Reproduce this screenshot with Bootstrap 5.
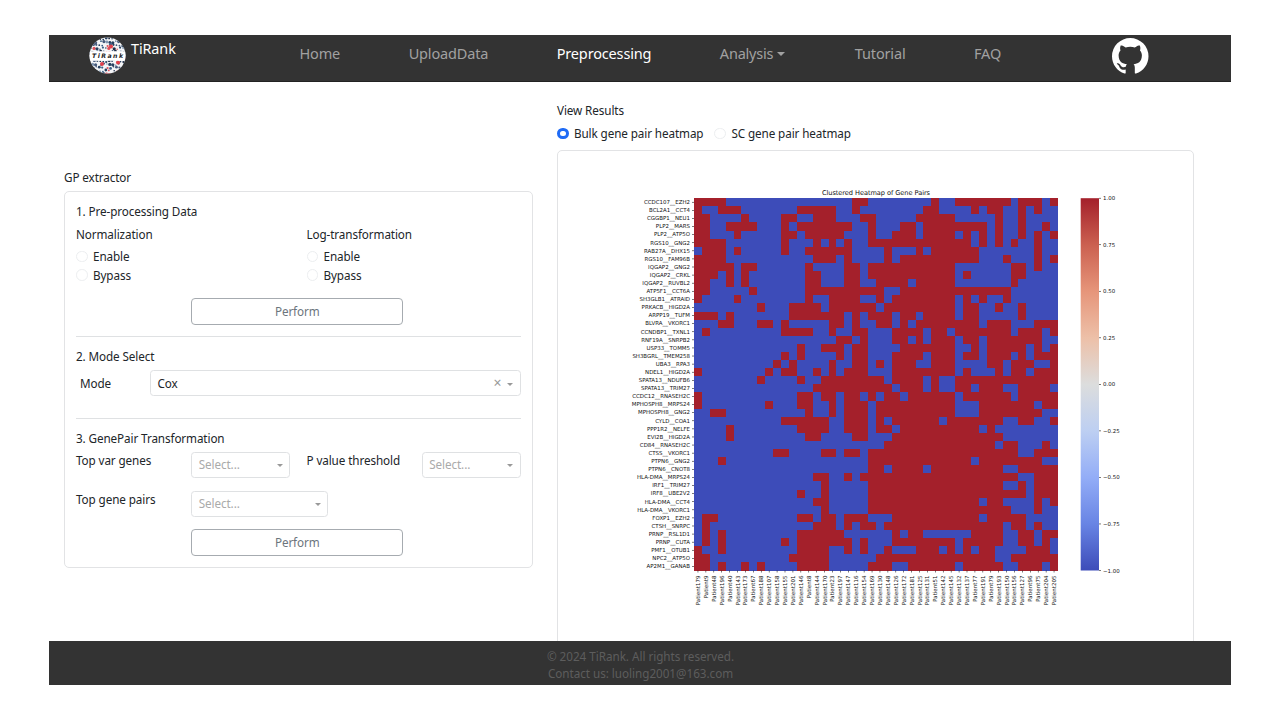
<!DOCTYPE html>
<html lang="en">
<head>
<meta charset="utf-8">
<meta name="viewport" content="width=device-width, initial-scale=1">
<title>TiRank - Preprocessing</title>
<link href="https://cdn.jsdelivr.net/npm/bootstrap@5.3.0/dist/css/bootstrap.min.css" rel="stylesheet">
<style>
  body { font-family: "Noto Sans", "Open Sans", sans-serif; font-size: 11.7px; line-height: 18px; letter-spacing: -.1px; color: #212529; background: #fff; overflow: hidden; }
  .app-shell { width: 1182px; height: 650px; margin: 35px 0 0 49px; overflow: hidden; }
  .top-bar { height: 46.5px; background: #333; border-bottom: 1px solid #222; padding: 0 0 0 40px; }
  .brand-name { color: #fff; font-size: 14.4px; line-height: 20px; margin: 3.5px 0 0 5px; width: 168.5px; }
  .top-links { gap: 68.5px; padding-top: 8px; font-size: 14.5px; line-height: 20px; letter-spacing: -.16px; }
  .top-links a { color: #a1a1a1; text-decoration: none; white-space: nowrap; }
  .top-links a.current { color: #fff; }
  .top-links .dropdown-toggle { margin-right: 1px; letter-spacing: -.2px; }
  .top-links .dropdown-toggle::after { margin-left: 4px; vertical-align: 3.5px; border-top-width: 4px; border-left-width: 4px; border-right-width: 4px; }
  .git-link { margin: 3px 0 0 auto; padding-right: 82.5px; }
  .page-body { height: 559.5px; padding-left: 15px; gap: 24px; overflow: hidden; }
  .side-form { width: 469px; padding-top: 86px; }
  .panel { border: 1px solid #e2e3e5; border-radius: 5px; background: #fff; }
  .form-panel { height: 377px; margin-top: 5px; padding: 10.5px 11.5px 0 11px; }
  .form-panel .row { --bs-gutter-x: 16.5px; }
  .results { width: 637px; padding-top: 19.5px; }
  .results .panel { height: 520px; margin-top: 7.5px; }
  .dot { width: 11.5px; height: 11.5px; border: 1px solid #eceef0; border-radius: 50%; background: #fff; display: inline-block; flex: none; }
  .dot.picked { border: 3.6px solid #1f6bf5; }
  .choice { display: flex; align-items: center; gap: 5.5px; height: 18.5px; }
  .btn-run { display: block; width: calc(100% - 2px); height: 27px; padding: 0; font-size: 11.7px; line-height: 25.5px; letter-spacing: -.1px; color: #6c757d; border: 1px solid #a6abb0; border-radius: 4px; background: #fff; }
  .rule { height: 1px; background: #dfe1e3; }
  .pick { display: flex; align-items: center; height: 26px; border: 1px solid #dfe1e3; border-radius: 3.5px; padding: 0 6.5px 1px 6.5px; background: #fff; color: #aaa; }
  .pick::after { content: ""; margin-left: auto; border: 3.6px solid transparent; border-top-color: #999; border-bottom: 0; margin-top: 3px; }
  .pick .clear-x { margin-left: auto; color: #999; font-size: 14px; }
  .pick .clear-x + .spacer { width: 5.5px; }
  .pick:has(.clear-x)::after { margin-left: 0; }
  .page-foot { height: 44px; background: #333; color: #5d5d5d; font-size: 11.7px; line-height: 17px; letter-spacing: -.03px; padding-top: 7px; padding-left: 1px; }
  svg text { font-family: "DejaVu Sans", sans-serif; fill: #111; letter-spacing: 0; }
  svg .mark-text { font-weight: bold; font-style: italic; fill: #222; }
</style>
</head>
<body>
<div class="app-shell">
  <nav class="top-bar d-flex align-items-start">
    <svg width="37" height="37" viewBox="0 0 37 37" style="margin-top:2px" aria-label="TiRank logo">
      <defs><clipPath id="disc"><circle cx="18.5" cy="18.5" r="18"/></clipPath></defs>
      <circle cx="18.5" cy="18.5" r="18" fill="#f4f5f7"/>
      <g clip-path="url(#disc)">
        <g id="cells"></g>
        <rect x="0" y="14.2" width="37" height="9.6" fill="#fff"/>
      </g>
      <text class="mark-text" x="3" y="21.3" font-size="6.2" textLength="31">TiRank</text>
    </svg>
    <div class="brand-name">TiRank</div>
    <div class="top-links d-flex">
      <a href="#">Home</a>
      <a href="#">UploadData</a>
      <a href="#" class="current">Preprocessing</a>
      <a href="#" class="dropdown-toggle">Analysis</a>
      <a href="#">Tutorial</a>
      <a href="#">FAQ</a>
    </div>
    <a class="git-link" href="#" aria-label="GitHub">
      <svg class="d-block" width="36.5" height="36.5" viewBox="2 2 20 20" fill="#fff"><path d="M12,2A10,10 0 0,0 2,12C2,16.42 4.87,20.17 8.84,21.5C9.34,21.58 9.5,21.27 9.5,21C9.5,20.77 9.5,20.14 9.5,19.31C6.73,19.91 6.14,17.97 6.14,17.97C5.68,16.81 5.03,16.5 5.03,16.5C4.12,15.88 5.1,15.9 5.1,15.9C6.1,15.97 6.63,16.93 6.63,16.93C7.5,18.45 8.97,18 9.54,17.76C9.63,17.11 9.89,16.67 10.17,16.42C7.95,16.17 5.62,15.31 5.62,11.5C5.62,10.39 6,9.5 6.65,8.79C6.55,8.54 6.2,7.5 6.75,6.15C6.75,6.15 7.59,5.88 9.5,7.17C10.29,6.95 11.15,6.84 12,6.84C12.85,6.84 13.71,6.95 14.5,7.17C16.41,5.88 17.25,6.15 17.25,6.15C17.8,7.5 17.45,8.54 17.35,8.79C18,9.5 18.38,10.39 18.38,11.5C18.38,15.32 16.04,16.16 13.81,16.41C14.17,16.72 14.5,17.33 14.5,18.26C14.5,19.6 14.5,20.68 14.5,21C14.5,21.27 14.66,21.59 15.17,21.5C19.14,20.16 22,16.42 22,12A10,10 0 0,0 12,2Z"/></svg>
    </a>
  </nav>

  <main class="page-body d-flex">
    <section class="side-form">
      <div>GP extractor</div>
      <div class="panel form-panel">
        <div>1. Pre-processing Data</div>
        <div class="row" style="margin-top:4.5px">
          <div class="col-6">
            <div style="margin-bottom:4.5px">Normalization</div>
            <div class="choice"><span class="dot"></span>Enable</div>
            <div class="choice"><span class="dot"></span>Bypass</div>
          </div>
          <div class="col-6">
            <div style="margin-bottom:4.5px">Log-transformation</div>
            <div class="choice"><span class="dot"></span>Enable</div>
            <div class="choice"><span class="dot"></span>Bypass</div>
          </div>
        </div>
        <div class="row" style="margin-top:13.5px"><div class="col-6 offset-3"><button class="btn-run">Perform</button></div></div>
        <div class="rule" style="margin-top:11px"></div>
        <div style="margin-top:10.5px">2. Mode Select</div>
        <div class="d-flex align-items-center" style="margin-top:5px">
          <div style="width:74px;padding-left:4px">Mode</div>
          <div class="pick flex-fill text-body">Cox<span class="clear-x">×</span><span class="spacer"></span></div>
        </div>
        <div class="rule" style="margin-top:21.5px"></div>
        <div style="margin-top:10px">3. GenePair Transformation</div>
        <div class="row" style="margin-top:5px">
          <div class="col-3"><div style="margin-top:-1px">Top var genes</div></div>
          <div class="col-3"><div class="pick">Select...</div></div>
          <div class="col-3 text-nowrap"><div style="margin-top:-1px">P value threshold</div></div>
          <div class="col-3"><div class="pick">Select...</div></div>
        </div>
        <div class="row" style="margin-top:13px">
          <div class="col-3"><div style="margin-top:-1px">Top gene pairs</div></div>
          <div class="col-4"><div class="pick">Select...</div></div>
        </div>
        <div class="row" style="margin-top:12px"><div class="col-6 offset-3"><button class="btn-run">Perform</button></div></div>
      </div>
    </section>

    <section class="results">
      <div>View Results</div>
      <div class="d-flex" style="margin-top:5px;gap:11px">
        <div class="choice"><span class="dot picked"></span>Bulk gene pair heatmap</div>
        <div class="choice"><span class="dot"></span>SC gene pair heatmap</div>
      </div>
      <div class="panel">
        <svg id="plot" class="d-block" width="635" height="490" viewBox="558 151 635 490">
          <defs>
            <linearGradient id="coolwarm" x1="0" y1="0" x2="0" y2="1">
              <stop offset="0" stop-color="#a4202b"/><stop offset=".125" stop-color="#cb6050"/>
              <stop offset=".25" stop-color="#e6957a"/><stop offset=".375" stop-color="#edc0a8"/>
              <stop offset=".5" stop-color="#dcdddd"/><stop offset=".625" stop-color="#bdcff2"/>
              <stop offset=".75" stop-color="#93adf7"/><stop offset=".875" stop-color="#6884e4"/>
              <stop offset="1" stop-color="#3d4cb9"/>
            </linearGradient>
          </defs>
        </svg>
      </div>
    </section>
  </main>

  <footer class="page-foot text-center">
    <div>© 2024 TiRank. All rights reserved.</div>
    <div>Contact us: luoling2001@163.com</div>
  </footer>
</div>

<script src="https://cdn.jsdelivr.net/npm/bootstrap@5.3.0/dist/js/bootstrap.bundle.min.js"></script>
<script>
const NS = 'http://www.w3.org/2000/svg';
function add(parent, tag, attrs, text) {
  const el = document.createElementNS(NS, tag);
  for (const k in attrs) el.setAttribute(k, attrs[k]);
  if (text) el.textContent = text;
  parent.appendChild(el);
  return el;
}

// each gene pair with the column ranges whose value is +1
const pairs = [
['CCDC107__EZH2','0-3 20-21 30 33-39 41-43 45'],
['BCL2A1__CCT4','0 3-5 13-17 20 29-30 35 37-38 41 43'],
['CGGBP1__NEU1','0-1 6 11-12 15-17 21-22 28-32 38 41'],
['PLP2__MARS','0-1 4-7 11 13-19 22 26-27 29-36 38 41 44'],
['PLP2__ATP5O','0-1 5 11-12 14-18 22 25-27 29-32 34 36 38 41 43 45'],
['RGS10__GNG2','0-3 11 15 17 19 22-34 36 38 40 43'],
['RAB27A__DHX15','1-3 5 11 14-19 24 28 30-35 43'],
['RGS10__FAM96B','0-3 15-17 19 24 26-35 39 43 45'],
['IQGAP2__GNG2','0-4 6-7 14 19-20 22-32 40-41 43'],
['IQGAP2__CRKL','0-2 4 6 14-15 19-20 22-32 34 40-41'],
['IQGAP2__RUVBL2','0-1 4 6 14-15 19-20 23-26 28-32 40'],
['ATP5F1__CCT6A','0-1 7 14-23 26-39'],
['SH3GLB1__ATRAID','0 5 14 17-20 23 25-32 34 36 39'],
['PRKACB__HIGD2A','8 12-15 17-22 24-32 34-35 38 41'],
['ARPP19__TUFM','0-2 4 12-18 20 22-24 26-27 29-32 34-35 41'],
['BLVRA__VKORC1','3-4 8-9 11 17-18 20 23-24 26 28-35 37-39 43-45'],
['CCNDBP1__TXNL1','1 11-14 17 20-21 25-28 30-31 33-39 41-43 45'],
['RNF19A__SNRPB2','18-19 21 25-26 28 30-32 34-35 37-43'],
['USP33__TOMM5','13 16-18 20-21 26-32 35 37-41 43 45'],
['SH3BGRL__TMEM258','11 13 18 20-21 25-28 30-32 34-35 37-39 41 43-45'],
['UBA3__RPA3','10 12 17 20-21 23 25-27 30-32 37-38 40-42 45'],
['NDEL1__HIGD2A','0 9 11-12 15 17 19-21 25-32 34 38 40-41 43-45'],
['SPATA13__NDUFB6','8 13 16-23 25-28 30 33-45'],
['SPATA13__TRIM27','15-24 26-28 30 33-34 36-38 41-44'],
['CCDC12__RNASEH2C','0 13-14 16-17 19-20 22 24-25 27-32 34-39 41-45'],
['MPHOSPH8__MRPS24','0 9 13-14 17 19-21 23-32 36-42 44-45'],
['MPHOSPH8__GNG2','2-3 14 17 19-21 23-32 36-43'],
['CYLD__COA1','11-16 19-21 23 25-30 32-38 41-42 45'],
['PPP1R2__NELFE','4 13-16 19-21 23-24 26-35 37'],
['EVI2B__HIGD2A','4 14-15 20-21 25-38'],
['CD84__RNASEH2C','24-37 39-40 44'],
['CTSS__VKORC1','10-11 16-17 19-20 22-40 43-45'],
['PTPN6__GNG2','3 22-34 36-43'],
['PTPN6__CNOT8','22-23 25-28 30-38 41-45'],
['HLA-DMA__MRPS24','15-16 19 21-40 43-45'],
['IRF1__TRIM27','16 22-38 41 43-45'],
['IRF8__UBE2V2','13 16 22-41 43-45'],
['HLA-DMA__CCT4','15-16 22-35 37-38 43 45'],
['HLA-DMA__VKORC1','16 22-39 43'],
['FOXP1__EZH2','1-2 13-14 16-17 19-21 25-35 37-41'],
['CTSH__SNRPC','1 15-17 19 21-22 24-38 40-41 43'],
['PRNP__RSL1D1','1 3 13-18 25 27-28 35-38 41-42 44-45'],
['PRNP__CUTA','1 3 11 13-19 21 25-32 34-38 41-42 44'],
['PMF1__OTUB1','0 3 13-16 19 21 24 28-30 32 34 36-37 42-44'],
['NPC2__ATP5O','0-1 12-16 23-37 40-45'],
['AP2M1__GANAB','0-1 3 6 8 13-16 22-24 27-32 34-38 41-43 45']
];
const patients = [179,9,48,196,40,143,173,67,188,107,158,155,201,146,8,144,170,23,197,147,116,154,169,130,148,126,172,181,125,131,51,142,145,132,137,77,191,79,193,150,156,127,96,75,204,205];

const plot = document.getElementById('plot');
const X = 694, Y = 198.2, W = 364, H = 372.3;
const cw = W / patients.length, rh = H / pairs.length;
add(plot, 'text', {x: 876, y: 194.6, 'font-size': 6.6, 'text-anchor': 'middle', textLength: 108}, 'Clustered Heatmap of Gene Pairs');
add(plot, 'rect', {x: X, y: Y, width: W, height: H, fill: '#3d4cb9', 'shape-rendering': 'crispEdges'});
pairs.forEach(([name, runs], r) => {
  const y = Y + r * rh;
  runs.split(' ').forEach(run => {
    const [a, b = a] = run.split('-').map(Number);
    add(plot, 'rect', {x: X + a * cw, y: y, width: (b - a + 1) * cw, height: rh, fill: '#a4202b', 'shape-rendering': 'crispEdges'});
  });
  add(plot, 'text', {x: 690, y: y + rh / 2 + 1.8, 'font-size': 5.45, 'text-anchor': 'end'}, name);
  add(plot, 'rect', {x: 692, y: y + rh / 2 - .3, width: 2, height: .6, fill: '#222'});
});
patients.forEach((id, c) => {
  const x = X + (c + .5) * cw;
  add(plot, 'rect', {x: x - .3, y: Y + H, width: .6, height: 2, fill: '#222'});
  add(plot, 'text', {transform: `translate(${x + 2} 575.6) rotate(-90)`, 'font-size': 5.5, 'text-anchor': 'end'}, 'Patient' + id);
});
add(plot, 'rect', {x: 1080.7, y: Y, width: 18.3, height: H, fill: 'url(#coolwarm)'});
['1.00','0.75','0.50','0.25','0.00','−0.25','−0.50','−0.75','−1.00'].forEach((t, i) => {
  const y = Y + i * H / 8;
  add(plot, 'rect', {x: 1099, y: y - .3, width: 2, height: .6, fill: '#222'});
  add(plot, 'text', {x: 1103, y: y + 2, 'font-size': 5.45}, t);
});

// speckle of cells in the round logo
const cells = document.getElementById('cells');
const tones = ['#27405f', '#3c6187', '#1d2c45', '#27405f', '#45597a', '#e0505a', '#7f95b0'];
for (let i = 0, row = 0; row < 12; row++) {
  for (let col = 0; col < 12; col++, i++) {
    add(cells, 'circle', {
      cx: col * 3.3 + (i * 13 % 7) * .35, cy: 1 + row * 3.2 + (i * 11 % 5) * .4,
      r: [1.4, .9, 1.6, 1.1, .8][(i * i + row) % 5], fill: tones[(i * i * 3 + row * 2 + col) % 7]
    });
  }
}
[[22, 9.5], [13, 27], [29, 25.5]].forEach(([cx, cy]) => add(cells, 'circle', {cx, cy, r: 2, fill: '#e0404a'}));
</script>
</body>
</html>
